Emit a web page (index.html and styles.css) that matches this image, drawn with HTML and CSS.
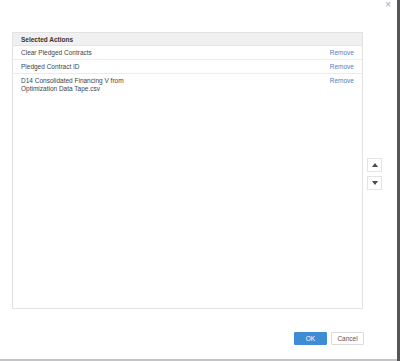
FILE: index.html
```html
<!DOCTYPE html>
<html lang="en">

<head>
  <meta charset="UTF-8">
  <meta name="viewport" content="width=device-width, initial-scale=1.0">
  <title>Selected Actions</title>
  <link rel="stylesheet" href="styles.css">
</head>

<body>
  <div class="page">
    <div class="modal">
      <div class="modal-header">
        <span class="close">&times;</span>
      </div>
      <div class="modal-body">
        <div class="list-box">
          <div class="list-header">Selected Actions</div>
          <div class="list-row">
            <span class="row-name">Clear Pledged Contracts</span>
            <a href="#" class="remove">Remove</a>
          </div>
          <div class="list-row">
            <span class="row-name">Pledged Contract ID</span>
            <a href="#" class="remove">Remove</a>
          </div>
          <div class="list-row">
            <span class="row-name">D14 Consolidated Financing V from<br>Optimization Data Tape.csv</span>
            <a href="#" class="remove">Remove</a>
          </div>
        </div>
        <div class="sort-buttons">
          <button class="sort-btn"><span class="arrow-up"></span></button>
          <button class="sort-btn"><span class="arrow-down"></span></button>
        </div>
      </div>
      <div class="modal-footer">
        <button class="btn btn-ok">OK</button>
        <button class="btn btn-cancel">Cancel</button>
      </div>
    </div>
    <div class="side"></div>
  </div>
</body>

</html>
```

FILE: styles.css
```css
* {
  box-sizing: border-box;
}

body {
  font-family: "Liberation Sans", Arial, sans-serif;
  margin: 0;
  padding: 0;
  background: #ffffff;
}

.page {
  display: flex;
  width: 400px;
  height: 361px;
}

.modal {
  width: 397px;
  flex: none;
  display: flex;
  flex-direction: column;
  background: #ffffff;
  border-bottom: 2px solid #c4c4c8;
  padding-left: 12px;
}

.side {
  width: 3px;
  flex: none;
  background: #55555a;
}

.modal-header {
  height: 32px;
  display: flex;
  justify-content: flex-end;
  padding-right: 6px;
}

.close {
  color: #a8a8a8;
  font-size: 10px;
  line-height: 8px;
  padding-top: 1px;
}

.modal-body {
  display: flex;
  height: 277px;
}

.list-box {
  width: 351px;
  flex: none;
  border: 1px solid #e2e2e2;
  font-size: 6.5px;
  color: #444444;
}

.list-header {
  background: #f0f0f0;
  font-weight: bold;
  color: #333333;
  padding: 3px 8px 1px;
  line-height: 8px;
  border-bottom: 1px solid #e4e4e4;
}

.list-row {
  display: flex;
  justify-content: space-between;
  align-items: flex-start;
  padding: 3px 8px 2px;
  line-height: 8px;
  border-bottom: 1px solid #ececec;
}

.list-row:last-child {
  border-bottom: none;
}

.remove {
  color: #3f86c8;
  text-decoration: none;
}

.sort-buttons {
  display: flex;
  flex-direction: column;
  gap: 4px;
  padding-top: 126px;
  margin-left: 4px;
}

.sort-btn {
  width: 15px;
  height: 14px;
  padding: 0;
  background: #ffffff;
  border: 1px solid #e4e4e4;
  display: flex;
  justify-content: center;
  align-items: center;
}

.arrow-up {
  width: 0;
  height: 0;
  border-left: 3.5px solid transparent;
  border-right: 3.5px solid transparent;
  border-bottom: 4px solid #4a4a4a;
}

.arrow-down {
  width: 0;
  height: 0;
  border-left: 3.5px solid transparent;
  border-right: 3.5px solid transparent;
  border-top: 4px solid #4a4a4a;
}

.modal-footer {
  display: flex;
  justify-content: flex-end;
  gap: 4px;
  margin-top: 23px;
  padding-right: 33px;
}

.btn {
  font-family: "Liberation Sans", Arial, sans-serif;
  font-size: 6.5px;
  width: 33px;
  height: 13px;
  padding: 0;
  border-radius: 1px;
}

.btn-ok {
  background: #3d8cd4;
  border: 1px solid #3d8cd4;
  color: #ffffff;
}

.btn-cancel {
  background: #ffffff;
  border: 1px solid #dcdcdc;
  color: #555555;
}
```
